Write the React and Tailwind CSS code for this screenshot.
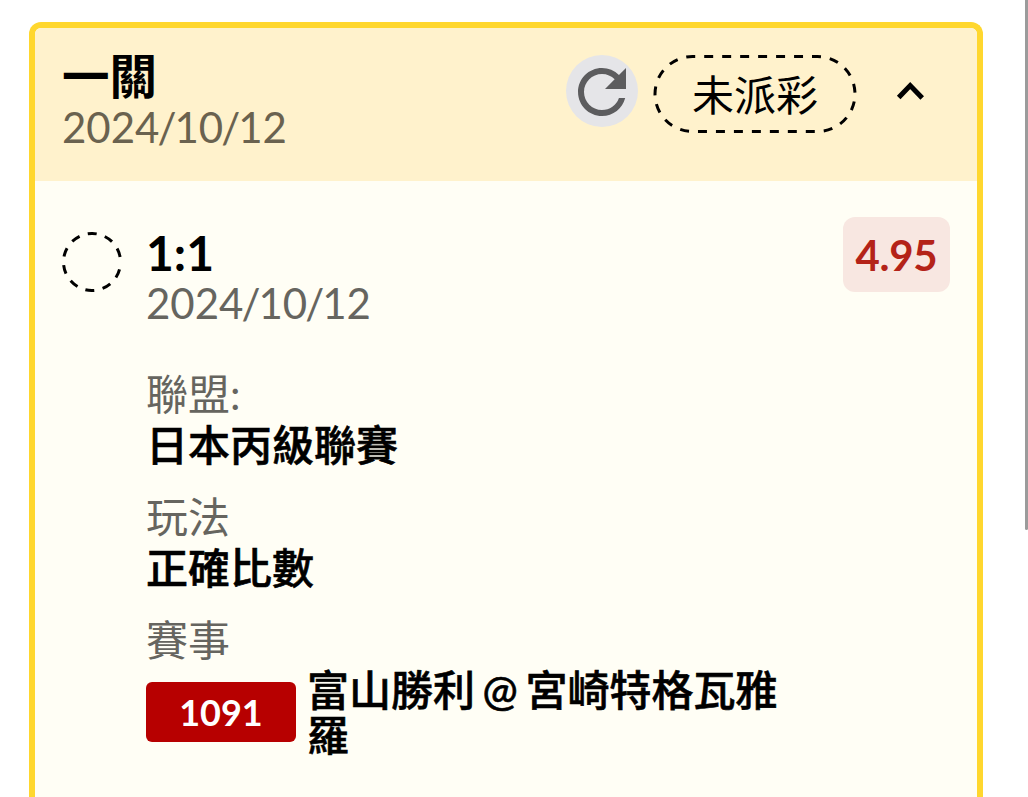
import React, { useState } from 'react';
import { MdRefresh } from 'react-icons/md';

const bet = {
  type: '一關',
  date: '2024/10/12',
  status: '未派彩',
  pick: '1:1',
  pickDate: '2024/10/12',
  odds: '4.95',
  league: '日本丙級聯賽',
  play: '正確比數',
  matchNo: '1091',
  match: '富山勝利 @ 宮崎特格瓦雅羅',
};

// slashes are set a little tighter than the digits
const DateText = ({ value }) =>
  value.split('/').map((part, i) => (
    <React.Fragment key={i}>
      {i > 0 && <span className="-mx-[2px]">/</span>}
      {part}
    </React.Fragment>
  ));

const StatusPill = ({ children }) => (
  <div className="relative w-[204px] h-[78px] pt-[2px] flex items-center justify-center">
    <svg className="absolute inset-0" width="204" height="78" viewBox="0 0 204 78" fill="none">
      <path
        d="M51.2 1.5H164.5A37.5 37.5 0 0 1 164.5 76.5H39.5A37.5 37.5 0 0 1 39.5 1.5Z"
        stroke="#000"
        strokeWidth="3"
        pathLength="486"
        strokeDasharray="9 9"
      />
    </svg>
    <span className="text-[42px] leading-none">{children}</span>
  </div>
);

const PendingCircle = () => (
  <svg className="shrink-0" width="60" height="60" viewBox="0 0 60 60" fill="none">
    <circle
      cx="30"
      cy="30"
      r="28.5"
      stroke="#000"
      strokeWidth="3"
      pathLength="360"
      transform="rotate(15 30 30)"
      strokeDasharray="18 17.2 18 17.2 18 17.2 18 17.2 18 17.2 18 17.2 18 17.2 18 17.2 18 17.2 18 99"
    />
  </svg>
);

const App = () => {
  const [open, setOpen] = useState(true);

  return (
    <div className="w-[1028px] h-[797px] bg-white flex justify-between overflow-hidden font-['Lato','Noto_Sans_CJK_TC',sans-serif] text-black">
      <div className="ml-[29px] mt-[22px] w-[954px] h-[775px] border-6 border-b-0 border-[#ffd72e] rounded-t-[12px] bg-[#fffef5] overflow-hidden">
        {/* Header */}
        <div className="h-[153px] bg-[#fff2cc] flex items-start pl-[27px]">
          <div className="pt-[23px] w-[504px]">
            <h1 className="text-[47.5px] leading-[50px] font-bold">{bet.type}</h1>
            <p className="mt-[1px] text-[42px] leading-[50px] text-[#6a624f]">
              <DateText value={bet.date} />
            </p>
          </div>
          <button className="mt-[27px] size-[72px] rounded-full bg-[#e5e5e8] flex items-center justify-center pt-[2px]">
            <MdRefresh className="size-[72px] shrink-0 text-[#5c5c5e]" />
          </button>
          <div className="ml-[15px] mt-[27px]">
            <StatusPill>{bet.status}</StatusPill>
          </div>
          <button className="ml-[38px] mt-[52px]" onClick={() => setOpen(!open)}>
            <svg width="30" height="24" viewBox="0 0 30 24" fill="none">
              <path d="M3.7 17.5L15.2 5.6L27.2 18" stroke="#000" strokeWidth="5" />
            </svg>
          </button>
        </div>

        {/* Bet details */}
        {open && (
          <div className="flex items-start pl-[27px] pr-[27px] pt-[36px]">
            <div className="pt-[15px]">
              <PendingCircle />
            </div>
            <div className="ml-[24px] pt-[11px] w-[660px]">
              <h2 className="text-[48px] leading-[50px] font-bold">{bet.pick}</h2>
              <p className="text-[42px] leading-[50px] text-[#66655f]">
                <DateText value={bet.pickDate} />
              </p>
              <div className="mt-[41px] text-[42px] leading-[50px]">
                <p className="text-[#66655f]">聯盟:</p>
                <p className="mt-[1px] font-medium [-webkit-text-stroke:0.6px_#000]">{bet.league}</p>
                <p className="mt-[22px] text-[#66655f]">玩法</p>
                <p className="mt-[1px] font-medium [-webkit-text-stroke:0.6px_#000]">{bet.play}</p>
                <p className="mt-[22px] text-[#66655f]">賽事</p>
              </div>
              <div className="mt-px flex items-center">
                <span className="w-[150px] h-[60px] rounded-[6px] bg-[#b70000] text-white text-[36px] font-bold flex items-center justify-center">
                  {bet.matchNo}
                </span>
                <p className="pt-[2px] ml-[11px] w-[480px] text-[42px] leading-[45px] font-medium [word-spacing:-3px] [-webkit-text-stroke:0.6px_#000]">
                  {bet.match}
                </p>
              </div>
            </div>
            <span className="ml-auto w-[107px] h-[75px] pt-[2px] rounded-[12px] bg-[#f8e7e1] text-[#b42318] text-[42px] tracking-[-0.3px] font-bold flex items-center justify-center">
              {bet.odds}
            </span>
          </div>
        )}
      </div>

      {/* Scrollbar */}
      <div className="w-[3px] h-[530px] bg-[#9b9b9b] rounded-b-[2px]"></div>
    </div>
  );
};

export default App;
